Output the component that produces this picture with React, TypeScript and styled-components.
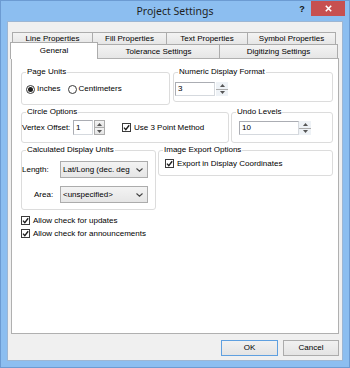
import React from 'react'
import styled, { createGlobalStyle } from 'styled-components'

const GlobalStyle = createGlobalStyle`
  html, body {
    margin: 0;
    padding: 0;
    background: #8cbef0;
  }
  body {
    font-family: 'Liberation Sans', Arial, sans-serif;
    font-size: 8px;
    color: #000;
  }
  #root {
    width: 350px;
    height: 368px;
  }
`

const Window = styled.div`
  width: 350px;
  height: 368px;
  box-sizing: border-box;
  border: 1px solid #6c9bd2;
  background: #8cbef0;
  display: flex;
  flex-direction: column;
`

const TitleBar = styled.div`
  flex: none;
  height: 20px;
  display: grid;
  grid-template-columns: 1fr auto 1fr;
`

const Title = styled.div`
  grid-column: 2;
  font-family: 'Noto Sans', 'Liberation Sans', sans-serif;
  font-size: 10.5px;
  line-height: 21px;
  color: #1e1e1e;
`

const Controls = styled.div`
  display: flex;
  justify-content: flex-end;
  align-items: flex-start;
`

const HelpButton = styled.span`
  width: 10px;
  margin: 3px 4px 0 0;
  font: bold 9px/10px 'Liberation Sans', Arial, sans-serif;
  text-align: center;
  color: #111;
`

const CloseButton = styled.span`
  width: 34px;
  height: 15px;
  margin-right: 4px;
  background: #c75050;
  display: flex;
  align-items: center;
  justify-content: center;
`

const Frame = styled.div`
  flex: 1;
  display: flex;
  padding: 0 6px 6px;
  min-height: 0;
`

const Client = styled.div`
  flex: 1;
  border: 1px solid #9db6d3;
  background: #f0f0f0;
  padding: 10px 3px 4px;
  display: flex;
  flex-direction: column;
`

const TabRow = styled.div<{ $front?: boolean }>`
  display: flex;
  align-items: flex-end;
  height: ${({ $front }) => ($front ? 16 : 12)}px;
  margin: ${({ $front }) => ($front ? '-2px 0 0 -1px' : '0 0 0 1px')};
  position: relative;
  z-index: ${({ $front }) => ($front ? 2 : 1)};
`

const Tab = styled.div<{ $w: number; $back?: boolean; $active?: boolean }>`
  box-sizing: border-box;
  width: ${({ $w }) => $w}px;
  height: ${({ $back, $active }) => ($active ? 17 : $back ? 12 : 14)}px;
  border: 1px solid #acacac;
  border-bottom: none;
  background: ${({ $active }) => ($active ? '#fff' : 'linear-gradient(#f3f3f3, #e6e6e6)')};
  padding-top: ${({ $active }) => ($active ? 1 : 0)}px;
  line-height: ${({ $back }) => ($back ? 11 : 13)}px;
  text-align: center;
  white-space: nowrap;
  position: relative;
  z-index: ${({ $active }) => ($active ? 1 : 0)};
  margin-bottom: ${({ $active }) => ($active ? -1 : 0)}px;
  & + & {
    margin-left: -1px;
  }
`

const Panel = styled.div`
  flex: 1;
  border: 1px solid #b0b0b0;
  background: #fff;
  padding: 13px 5px 0 9px;
  display: flex;
  flex-direction: column;
`

const Row = styled.div<{ $gap: number; $top?: number }>`
  display: flex;
  align-items: flex-start;
  gap: ${({ $gap }) => $gap}px;
  margin-top: ${({ $top }) => $top ?? 0}px;
`

const Group = styled.div<{ $w: number; $h: number }>`
  box-sizing: border-box;
  width: ${({ $w }) => $w}px;
  height: ${({ $h }) => $h}px;
  border: 1px solid #dcdcdc;
  border-radius: 3px;
  display: flex;
  flex-direction: column;
`

const Legend = styled.span`
  align-self: flex-start;
  margin: -6px 0 0 4px;
  padding: 0 1px;
  background: #fff;
  line-height: 10px;
  white-space: nowrap;
`

const GroupBody = styled.div<{ $top: number; $left: number; $gap?: number }>`
  display: flex;
  align-items: center;
  margin-top: ${({ $top }) => $top}px;
  padding-left: ${({ $left }) => $left}px;
  gap: ${({ $gap }) => $gap ?? 0}px;
`

const Option = styled.label`
  display: flex;
  align-items: center;
  gap: 2px;
  line-height: 10px;
  white-space: nowrap;
`

const RadioMark = styled.span<{ $on?: boolean }>`
  box-sizing: border-box;
  width: 9px;
  height: 9px;
  border: 1px solid #3a3a3a;
  border-radius: 50%;
  background: #fff;
  display: flex;
  align-items: center;
  justify-content: center;
  &::after {
    content: '';
    display: ${({ $on }) => ($on ? 'block' : 'none')};
    width: 5px;
    height: 5px;
    border-radius: 50%;
    background: #1e1e1e;
  }
`

const CheckBox = styled.span`
  box-sizing: border-box;
  flex: none;
  width: 9px;
  height: 9px;
  border: 1px solid #3a3a3a;
  background: #fff;
  display: flex;
`

const CheckOption = styled.label<{ $ml?: number }>`
  display: flex;
  align-items: center;
  gap: 3px;
  margin-left: ${({ $ml }) => $ml ?? 0}px;
  line-height: 13px;
  white-space: nowrap;
`

const TextBox = styled.div<{ $w: number; $h: number }>`
  box-sizing: border-box;
  width: ${({ $w }) => $w}px;
  height: ${({ $h }) => $h}px;
  border: 1px solid #abadb3;
  border-right-color: #d5d9de;
  border-bottom-color: #d5d9de;
  background: #fff;
  padding-left: 2px;
  line-height: ${({ $h }) => $h - 2}px;
`

const Spin = styled.div<{ $boxed?: boolean; $h: number; $ml: number }>`
  box-sizing: border-box;
  width: ${({ $boxed }) => ($boxed ? 11 : 12)}px;
  height: ${({ $h }) => $h}px;
  margin-left: ${({ $ml }) => $ml}px;
  display: flex;
  flex-direction: column;
  border: ${({ $boxed }) => ($boxed ? '1px solid #acacac' : 'none')};
`

const SpinHalf = styled.span<{ $boxed?: boolean }>`
  flex: 1;
  display: flex;
  align-items: center;
  justify-content: center;
  background: ${({ $boxed }) => ($boxed ? 'linear-gradient(#f4f4f4, #e4e4e4)' : '#eef2f6')};
  & + & {
    border-top: 1px solid ${({ $boxed }) => ($boxed ? '#acacac' : '#fff')};
  }
`

const FieldLabel = styled.span<{ $w?: number; $indent?: number }>`
  width: ${({ $w }) => $w ?? 38}px;
  flex: none;
  box-sizing: border-box;
  padding-left: ${({ $indent }) => $indent ?? 0}px;
  line-height: 10px;
  white-space: nowrap;
`

const FieldRow = styled.div<{ $top: number }>`
  display: flex;
  align-items: center;
  margin-top: ${({ $top }) => $top}px;
`

const Select = styled.div`
  box-sizing: border-box;
  width: 88px;
  height: 17px;
  border: 1px solid #acacac;
  background: linear-gradient(#f3f3f3, #e6e6e6);
  display: flex;
  align-items: center;
  padding: 0 4px 0 2px;
`

const SelectText = styled.span`
  flex: 1;
  overflow: hidden;
  white-space: nowrap;
  line-height: 10px;
`

const Checks = styled.div`
  display: flex;
  flex-direction: column;
  margin-top: 4px;
`

const Footer = styled.div`
  display: flex;
  justify-content: flex-end;
  gap: 5px;
  margin-top: 6px;
`

const Button = styled.div<{ $w: number; $default?: boolean }>`
  box-sizing: border-box;
  width: ${({ $w }) => $w}px;
  height: 16px;
  border: 1px solid ${({ $default }) => ($default ? '#5fa0e0' : '#acacac')};
  background: linear-gradient(#f1f1f1, #e4e4e4);
  text-align: center;
  line-height: 14px;
`

const Arrow = ({ up }: { up?: boolean }) => (
  <svg width="5" height="3" viewBox="0 0 5 3">
    <path d={up ? 'M0 3 L2.5 0 L5 3 Z' : 'M0 0 L2.5 3 L5 0 Z'} fill="#555" />
  </svg>
)

const Tick = () => (
  <svg width="7" height="7" viewBox="0 0 7 7">
    <path d="M1 3.6 L2.8 5.6 L6.2 1.2" fill="none" stroke="#1e1e1e" strokeWidth="1.4" />
  </svg>
)

const Chevron = () => (
  <svg width="7" height="4" viewBox="0 0 7 4">
    <path d="M0.5 0.5 L3.5 3.2 L6.5 0.5" fill="none" stroke="#444" strokeWidth="1.1" />
  </svg>
)

const Spinner = ({ boxed, h, ml = 0 }: { boxed?: boolean; h: number; ml?: number }) => (
  <Spin $boxed={boxed} $h={h} $ml={ml}>
    <SpinHalf $boxed={boxed}>
      <Arrow up />
    </SpinHalf>
    <SpinHalf $boxed={boxed}>
      <Arrow />
    </SpinHalf>
  </Spin>
)

const Check = ({ children, ml }: { children: React.ReactNode; ml?: number }) => (
  <CheckOption $ml={ml}>
    <CheckBox>
      <Tick />
    </CheckBox>
    {children}
  </CheckOption>
)

const backTabs = [
  { label: 'Line Properties', w: 81 },
  { label: 'Fill Properties', w: 75 },
  { label: 'Text Properties', w: 82 },
  { label: 'Symbol Properties', w: 89 },
]

const frontTabs = [
  { label: 'General', w: 88, active: true },
  { label: 'Tolerance Settings', w: 123 },
  { label: 'Digitizing Settings', w: 119 },
]

const App: React.FC = () => {
  return (
    <>
      <GlobalStyle />
      <Window>
        <TitleBar>
          <Title>Project Settings</Title>
          <Controls>
            <HelpButton>?</HelpButton>
            <CloseButton>
              <svg width="7" height="7" viewBox="0 0 7 7">
                <path d="M0.8 0.8 L6.2 6.2 M6.2 0.8 L0.8 6.2" stroke="#fff" strokeWidth="1.6" />
              </svg>
            </CloseButton>
          </Controls>
        </TitleBar>
        <Frame>
          <Client>
            <TabRow>
              {backTabs.map((t) => (
                <Tab key={t.label} $w={t.w} $back>
                  {t.label}
                </Tab>
              ))}
            </TabRow>
            <TabRow $front>
              {frontTabs.map((t) => (
                <Tab key={t.label} $w={t.w} $active={t.active}>
                  {t.label}
                </Tab>
              ))}
            </TabRow>
            <Panel>
              <Row $gap={3}>
                <Group $w={149} $h={33}>
                  <Legend>Page Units</Legend>
                  <GroupBody $top={7} $left={4} $gap={7}>
                    <Option>
                      <RadioMark $on />
                      Inches
                    </Option>
                    <Option>
                      <RadioMark />
                      Centimeters
                    </Option>
                  </GroupBody>
                </Group>
                <Group $w={160} $h={30}>
                  <Legend>Numeric Display Format</Legend>
                  <GroupBody $top={5} $left={1} $gap={1}>
                    <TextBox $w={40} $h={14}>3</TextBox>
                    <Spinner h={14} />
                  </GroupBody>
                </Group>
              </Row>
              <Row $gap={2} $top={7}>
                <Group $w={208} $h={31}>
                  <Legend>Circle Options</Legend>
                  <GroupBody $top={3} $left={0}>
                    <FieldLabel $w={51}>Vertex Offset:</FieldLabel>
                    <TextBox $w={20} $h={15}>1</TextBox>
                    <Spinner boxed h={15} ml={1} />
                    <Check ml={17}>Use 3 Point Method</Check>
                  </GroupBody>
                </Group>
                <Group $w={102} $h={31}>
                  <Legend>Undo Levels</Legend>
                  <GroupBody $top={4} $left={7}>
                    <TextBox $w={60} $h={14}>10</TextBox>
                    <Spinner h={14} />
                  </GroupBody>
                </Group>
              </Row>
              <Row $gap={2} $top={7}>
                <Group $w={135} $h={60}>
                  <Legend>Calculated Display Units</Legend>
                  <FieldRow $top={6}>
                    <FieldLabel>Length:</FieldLabel>
                    <Select>
                      <SelectText>Lat/Long (dec. deg</SelectText>
                      <Chevron />
                    </Select>
                  </FieldRow>
                  <FieldRow $top={8}>
                    <FieldLabel $indent={12}>Area:</FieldLabel>
                    <Select>
                      <SelectText>&lt;unspecified&gt;</SelectText>
                      <Chevron />
                    </Select>
                  </FieldRow>
                </Group>
                <Group $w={175} $h={26}>
                  <Legend>Image Export Options</Legend>
                  <GroupBody $top={2} $left={6}>
                    <Check>Export in Display Coordinates</Check>
                  </GroupBody>
                </Group>
              </Row>
              <Checks>
                <Check>Allow check for updates</Check>
                <Check>Allow check for announcements</Check>
              </Checks>
            </Panel>
            <Footer>
              <Button $w={57} $default>
                OK
              </Button>
              <Button $w={56}>Cancel</Button>
            </Footer>
          </Client>
        </Frame>
      </Window>
    </>
  )
}

export default App
